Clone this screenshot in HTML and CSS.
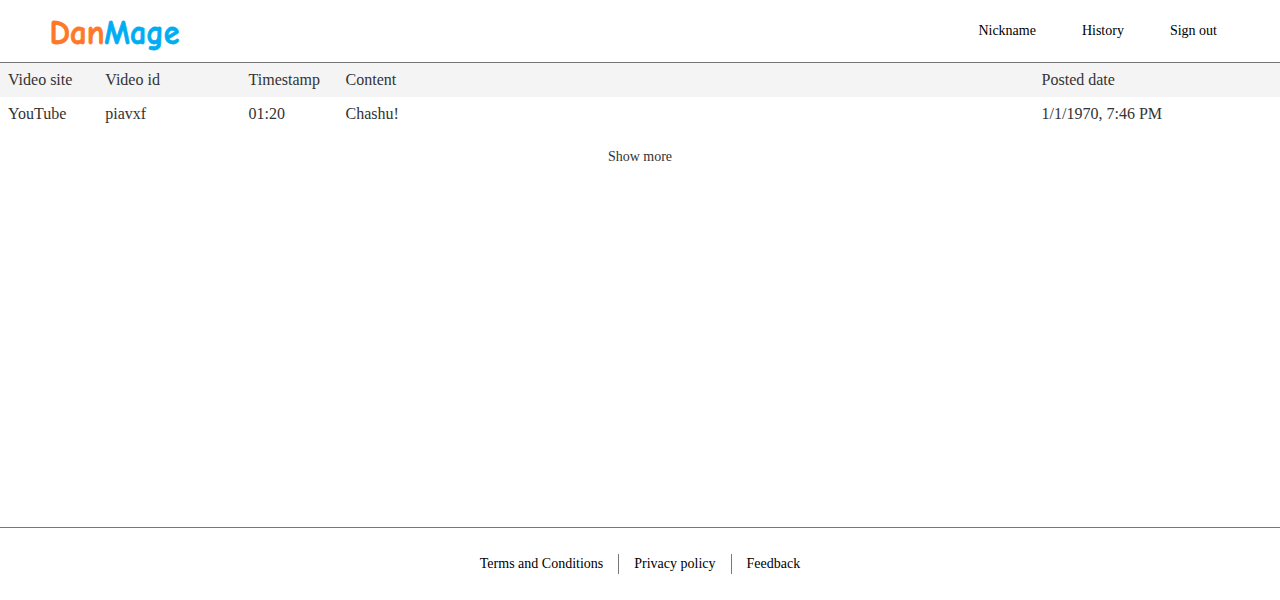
FILE: index.html
```html
<!DOCTYPE html>
<html lang="en">
<head>
<meta charset="utf-8">
<title>DanMage</title>
<link rel="stylesheet" href="styles.css">
</head>
<body>
<header class="header">
  <svg class="logo" width="130" height="44" viewBox="0 0 130 44" role="img" aria-label="DanMage">
    <text class="logo-dan" x="-1.4" y="34.8" textLength="55" lengthAdjust="spacingAndGlyphs">Dan</text>
    <text class="logo-mage" x="53.3" y="34.8" textLength="75" lengthAdjust="spacingAndGlyphs">Mage</text>
  </svg>
  <nav class="nav"><a>Nickname</a><a>History</a><a>Sign out</a></nav>
</header>
<main class="main">
  <div class="row row-head"><span>Video site</span><span>Video id</span><span>Timestamp</span><span>Content</span><span>Posted date</span></div>
  <div class="row"><span>YouTube</span><span>piavxf</span><span>01:20</span><span>Chashu!</span><span>1/1/1970, 7:46 PM</span></div>
  <div class="more">Show more</div>
</main>
<footer class="footer"><a>Terms and Conditions</a><a>Privacy policy</a><a>Feedback</a></footer>
</body>
</html>
```

FILE: styles.css
```css
* { box-sizing: border-box; }
body {
  margin: 0;
  height: 600px;
  display: flex;
  flex-direction: column;
  background: #fff;
  color: #333;
  font-family: "Liberation Serif", serif;
  font-size: 14px;
}
.header {
  height: 63px;
  padding: 0 63px 0 51px;
  border-bottom: 1px solid #777;
  display: flex;
  justify-content: space-between;
}
.logo { margin-top: 9px; overflow: visible; }
.logo text { font: bold 35px "Comic Neue", "Comic Sans MS", "Open Sans", sans-serif; stroke-width: 0.8; stroke-linejoin: round; }
.logo-dan { fill: #ff7828; stroke: #ff7828; }
.logo-mage { fill: #00adf2; stroke: #00adf2; }
.nav { display: flex; gap: 46px; padding-top: 23px; line-height: 16px; color: #000; }
.main { flex: 1; }
.row {
  display: grid;
  grid-template-columns: 97.3px 143.3px 97px 696px 1fr;
  padding-left: 8px;
  height: 34px;
  line-height: 34px;
  font-size: 16px;
}
.row-head { background: #f4f4f4; }
.more { padding-top: 18px; line-height: 16px; text-align: center; }
.footer {
  height: 73px;
  border-top: 1px solid #777;
  padding-top: 26px;
  display: flex;
  justify-content: center;
  line-height: 20px;
  color: #000;
}
.footer a { height: 20px; padding: 0 15px; }
.footer a + a { border-left: 1px solid #777; }
```
